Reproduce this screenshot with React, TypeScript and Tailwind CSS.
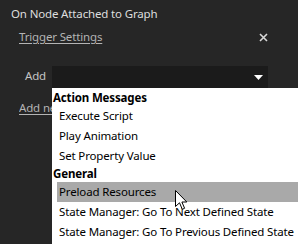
import React from "react";

const items1 = ["Execute Script", "Play Animation", "Set Property Value"];
const items2 = [
  "Preload Resources",
  "State Manager: Go To Next Defined State",
  "State Manager: Go To Previous Defined State",
];

export default function App() {
  return (
    <div
      className="relative w-[298px] h-[244px] overflow-hidden bg-[#262626] text-[11.5px] tracking-[-0.15px]"
      style={{ fontFamily: '"Noto Sans", "Open Sans", sans-serif' }}
    >
      <div className="pt-[6px] pl-[11px] h-[22px] leading-[16px] text-[#dedede]">
        On Node Attached to Graph
      </div>
      <div className="mt-[7px] flex items-center h-[16px] pl-[19px] pr-[30px]">
        <span className="leading-[16px] text-[#b4b4b4] underline underline-offset-2">
          Trigger Settings
        </span>
        <span className="ml-auto">
          <svg width="9" height="9" viewBox="0 0 9 9">
            <path d="M1 1 L8 8 M8 1 L1 8" stroke="#d8d8d8" strokeWidth="1.6" />
          </svg>
        </span>
      </div>
      <div className="mt-[21px] flex items-center h-[22px]">
        <span className="pl-[25px] w-[52px] text-[#c4c4c4] leading-[16px] -mt-[3px]">
          Add
        </span>
        <div className="w-[216px] h-[22px] bg-[#1b1b1b] flex items-center justify-end pr-[5px]">
          <svg width="9" height="5" viewBox="0 0 9 5">
            <path d="M0 0 L9 0 L4.5 5 Z" fill="#ffffff" />
          </svg>
        </div>
      </div>
      <div className="mt-[12px] ml-[19px] w-[33px] overflow-hidden whitespace-nowrap leading-[16px] text-[#b4b4b4] underline underline-offset-2">
        Add new action
      </div>

      <div className="absolute left-[52px] top-[88px] w-[260px] h-[170px] bg-white pt-[2px] text-black">
        <div className="h-[16px] leading-[16px] pl-[1px] font-bold">Action Messages</div>
        {items1.map((t) => (
          <div key={t} className="ml-[5px] h-[20px] leading-[20px] pl-[2px]">
            {t}
          </div>
        ))}
        <div className="h-[16px] leading-[16px] pl-[1px] font-bold">General</div>
        {items2.map((t, i) => (
          <div
            key={t}
            className={
              "ml-[5px] h-[20px] leading-[20px] pl-[2px] whitespace-nowrap " +
              (i === 0 ? "bg-[#a9a9a9]" : "")
            }
          >
            {t}
          </div>
        ))}
      </div>

      <svg
        className="absolute left-[175px] top-[190px]"
        width="13"
        height="21"
        viewBox="0 0 13 21"
      >
        <path
          d="M0.5 0.5 L0.5 16.5 L4.5 12.8 L7.3 19.3 L9.6 18.3 L6.9 12 L11.8 12 Z"
          fill="#ffffff"
          stroke="#000000"
          strokeWidth="1"
          strokeLinejoin="miter"
        />
      </svg>
    </div>
  );
}
